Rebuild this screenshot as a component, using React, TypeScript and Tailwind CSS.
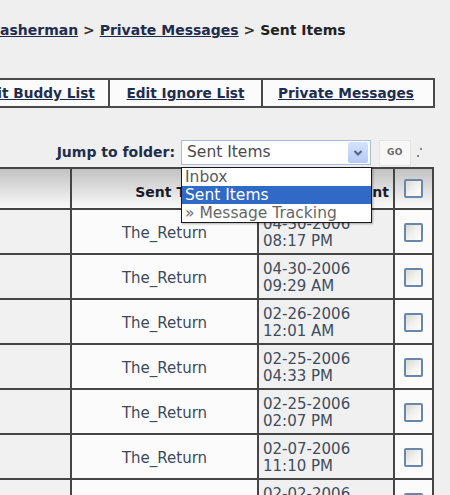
import React from "react";

const rows = [
  ["04-30-2006", "08:17 PM"],
  ["04-30-2006", "09:29 AM"],
  ["02-26-2006", "12:01 AM"],
  ["02-25-2006", "04:33 PM"],
  ["02-25-2006", "02:07 PM"],
  ["02-07-2006", "11:10 PM"],
  ["02-02-2006", "10:45 PM"],
];

function Checkbox() {
  return (
    <div className="w-[19px] h-[19px] rounded-[2px] border-2 border-[#6a86ad] bg-linear-to-br from-[#d9d8d1] via-[#f1f1ee] to-white" />
  );
}

export default function App() {
  return (
    <div className="w-[450px] h-[495px] overflow-hidden bg-[#efefef] font-['DejaVu_Sans',Verdana,sans-serif]">
      {/* breadcrumb */}
      <div className="pt-[22px] h-[38px] text-[14px] leading-[16px] font-bold text-[#1f2d4d] whitespace-nowrap">
        <span className="underline">asherman</span>
        <span className="text-[#333]"> &gt; </span>
        <span className="underline">Private Messages</span>
        <span className="text-[#333]"> &gt; </span>
        <span className="text-[#222]">Sent Items</span>
      </div>

      {/* buttons row */}
      <div className="mt-[40px] -ml-[37px] w-[472px] h-[30px] flex border-2 border-[#4a4a4a] bg-[#fbfbfb] text-[13.7px] font-bold text-[#1f2d4d] whitespace-nowrap">
        <div className="w-[145px] border-r-2 border-[#4a4a4a] flex items-center justify-center underline">
          Edit Buddy List
        </div>
        <div className="w-[153px] border-r-2 border-[#4a4a4a] flex items-center justify-center underline">
          Edit Ignore List
        </div>
        <div className="w-[166px] flex items-center justify-center underline">
          Private Messages
        </div>
      </div>

      {/* jump to folder */}
      <div className="mt-[32px] h-[25px] flex items-center">
        <div className="w-[175px] text-right text-[14px] font-bold text-[#1f2d4d] whitespace-nowrap">
          Jump to folder:
        </div>
        <div className="relative ml-[6px] w-[190px] h-[25px] border border-[#a9bcd6] bg-white flex items-center">
          <span className="pl-[5px] text-[15.5px] text-[#4a4a4a]">Sent Items</span>
          <div className="ml-auto mr-[2px] w-[20px] h-[21px] rounded-[2px] bg-linear-to-b from-[#d6e2fc] to-[#b5c9f5] flex items-center justify-center">
            <svg width="10" height="8" viewBox="0 0 10 8">
              <path d="M1.5 2 L5 5.5 L8.5 2" stroke="#4d6185" strokeWidth="2" fill="none" />
            </svg>
          </div>
          <div className="absolute top-[26px] -left-px w-[191px] border border-[#1a1a1a] bg-white text-[15.5px] leading-[18px] z-10 shadow-[1px_1px_2px_rgba(0,0,0,0.3)]">
            <div className="h-[18px] pl-[3px] text-[#5a5a5a]">Inbox</div>
            <div className="h-[18px] pl-[3px] bg-[#3169c6] text-white">Sent Items</div>
            <div className="h-[18px] pl-[3px] text-[#666]">» Message Tracking</div>
          </div>
        </div>
        <div className="ml-[8px] w-[32px] h-[26px] border border-[#e4e4e4] bg-[#f7f7f7] flex items-center justify-center text-[9px] font-bold text-[#6a6a6a] tracking-[0.5px]">
          GO
        </div>
        <div className="ml-[6px] flex flex-col gap-[5px] text-[#888]">
          <div className="w-[2px] h-[2px] bg-[#888] ml-[3px]" />
          <div className="w-[2px] h-[2px] bg-[#888]" />
        </div>
      </div>

      {/* table */}
      <div className="mt-[2px] -ml-[10px] w-[444px] border-t-2 border-[#454545]">
        <div className="h-[41px] flex border-b-2 border-[#454545] bg-linear-to-b from-[#c2c2c2] to-[#fafafa] text-[14px] font-bold text-[#1a1a2a] whitespace-nowrap">
          <div className="w-[82px] border-r-2 border-[#454545]" />
          <div className="w-[187px] border-r-2 border-[#454545] flex items-end justify-center pb-[5px]">
            Sent To
          </div>
          <div className="w-[136px] border-r-2 border-[#454545] flex items-end justify-end pr-[4px] pb-[5px]">
            Date Sent
          </div>
          <div className="w-[39px] border-r-2 border-[#454545] flex items-center justify-center">
            <Checkbox />
          </div>
        </div>
        {rows.map(([d, t], i) => (
          <div key={i} className="h-[45px] flex border-b-2 border-[#454545]">
            <div className="w-[82px] border-r-2 border-[#454545] bg-[#f1f1f1]" />
            <div className="w-[187px] border-r-2 border-[#454545] bg-[#fbfbfb] flex items-center justify-center pt-[3px] text-[15px] text-[#3b4a5a]">
              The_Return
            </div>
            <div className="w-[136px] border-r-2 border-[#454545] bg-[#f0f0f0] flex flex-col justify-center pl-[4px] pt-[3px] text-[15px] leading-[17px] text-[#3e4d5d]">
              <div>{d}</div>
              <div>{t}</div>
            </div>
            <div className="w-[39px] border-r-2 border-[#454545] bg-[#fbfbfb] flex items-center justify-center pt-[1px]">
              <Checkbox />
            </div>
          </div>
        ))}
      </div>
    </div>
  );
}
